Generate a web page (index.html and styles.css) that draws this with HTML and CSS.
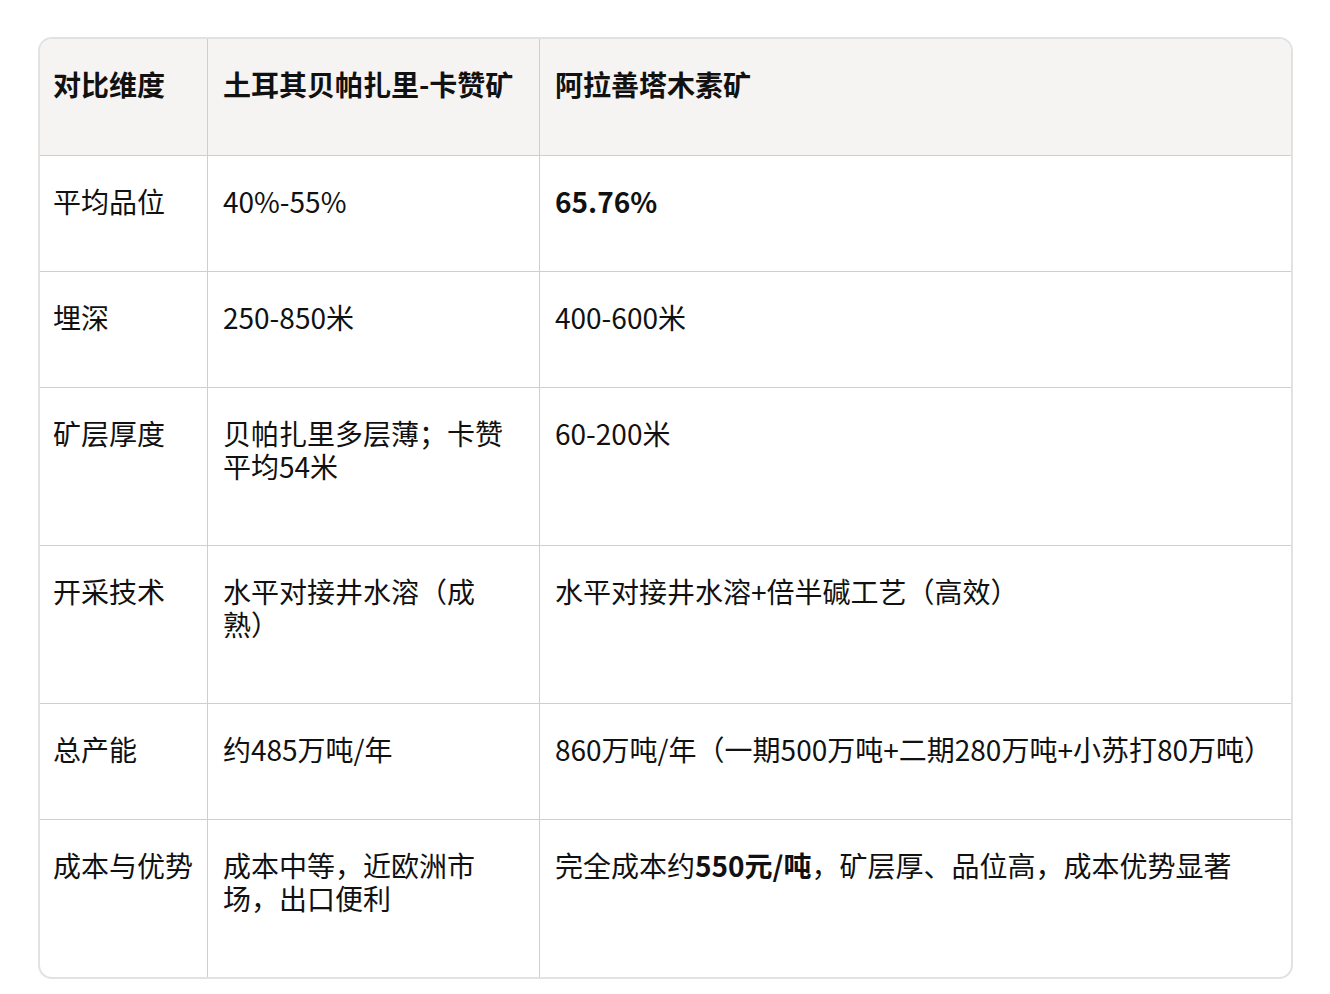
FILE: index.html
```html
<!DOCTYPE html>
<html lang="zh">
<head>
<meta charset="utf-8">
<link rel="stylesheet" href="styles.css">
</head>
<body>
<div class="wrap">
<table class="cmp">
  <colgroup>
    <col class="c1"><col class="c2"><col class="c3">
  </colgroup>
  <thead>
    <tr class="r1">
      <th>对比维度</th>
      <th>土耳其贝帕扎里-卡赞矿</th>
      <th>阿拉善塔木素矿</th>
    </tr>
  </thead>
  <tbody>
    <tr class="r1">
      <td>平均品位</td>
      <td>40%-55%</td>
      <td><strong>65.76%</strong></td>
    </tr>
    <tr class="r1">
      <td>埋深</td>
      <td>250-850米</td>
      <td>400-600米</td>
    </tr>
    <tr class="r2">
      <td>矿层厚度</td>
      <td>贝帕扎里多层薄；卡赞平均54米</td>
      <td>60-200米</td>
    </tr>
    <tr class="r2">
      <td>开采技术</td>
      <td>水平对接井水溶（成熟）</td>
      <td>水平对接井水溶+倍半碱工艺（高效）</td>
    </tr>
    <tr class="r1">
      <td>总产能</td>
      <td>约485万吨/年</td>
      <td>860万吨/年（一期500万吨+二期280万吨+小苏打80万吨）</td>
    </tr>
    <tr class="r2">
      <td>成本与优势</td>
      <td>成本中等，近欧洲市场，出口便利</td>
      <td>完全成本约<strong>550元/吨</strong>，矿层厚、品位高，成本优势显著</td>
    </tr>
  </tbody>
</table>
</div>
</body>
</html>
```

FILE: styles.css
```css
html, body {
  margin: 0;
  padding: 0;
  background: #ffffff;
}
body {
  font-family: "Noto Sans CJK SC", "Noto Sans", sans-serif;
  color: #111111;
}
.wrap {
  padding: 37px 38px 0 38px;
}
.cmp {
  width: 1255px;
  border-collapse: separate;
  border-spacing: 0;
  border: 2px solid #e2e2e2;
  border-radius: 14px;
  overflow: hidden;
  table-layout: fixed;
}
.c1 { width: 167px; }
.c2 { width: 332px; }
.c3 { width: auto; }
.cmp th, .cmp td {
  font-size: 28px;
  line-height: 33px;
  text-align: left;
  vertical-align: top;
  padding: 29px 16px 0 15px;
  border-left: 1px solid #cfcfcf;
  border-top: 1px solid #cfcfcf;
  text-spacing-trim: space-all;
}
.cmp th:first-child, .cmp td:first-child {
  border-left: none;
  padding-left: 13px;
  padding-right: 8px;
}
.cmp th:nth-child(2), .cmp td:nth-child(2) {
  padding-right: 26px;
}
.cmp thead th {
  border-top: none;
  background: #f6f3f3;
  font-weight: 700;
  white-space: nowrap;
}
.cmp strong { font-weight: 700; }
.r1 { height: 116px; }
.r2 { height: 158px; }
.cmp thead .r1 { height: 116px; }
```
